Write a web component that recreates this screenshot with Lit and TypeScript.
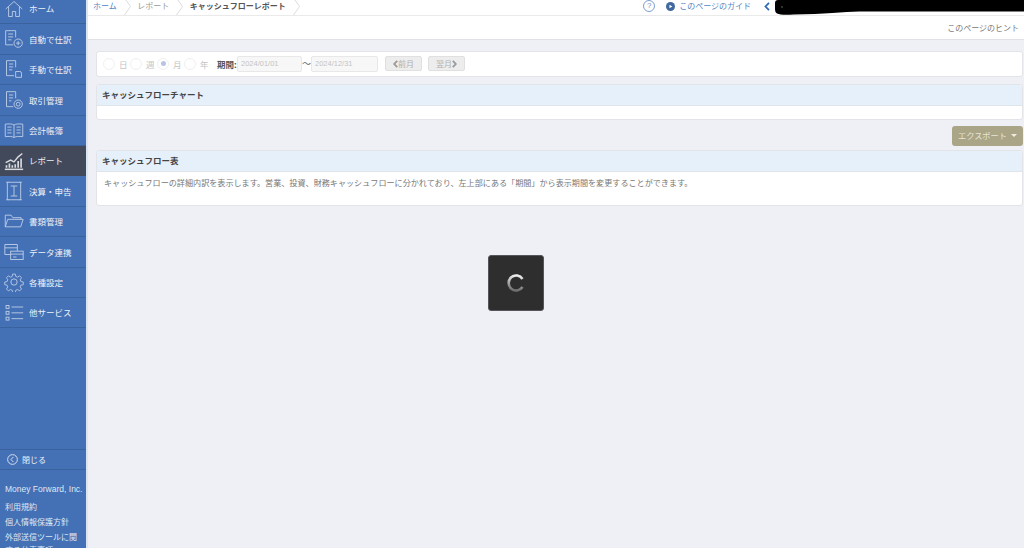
import { LitElement, html, css, svg } from "lit";
import { customElement } from "lit/decorators.js";

const ICONS: Record<string, unknown> = {
  home: svg`<path d="M2 12 12 3l10 9M5.500 9.500V21H10v-6h4v6h4.500V9.500"/>`,
  auto: svg`<path d="M14 10V2H2v17h9"/><path d="M5 6h6M5 9.500h6M5 13h4"/><circle cx="17" cy="17" r="5"/><path d="M17 14.500v5M14.500 17h5"/>`,
  manual: svg`<path d="M14 10V2H3v18h9"/><path d="M6 6h5M6 9.500h5M6 13h4"/><path d="M14 15h5a2 2 0 0 1 2 2v5h-7z"/>`,
  deal: svg`<path d="M14 10V2H3v18h8"/><path d="M6 6h5M6 9.500h5M6 13h3"/><circle cx="17" cy="17" r="5"/><circle cx="17" cy="17" r="2.300"/>`,
  book: svg`<path d="M12 6C10 4.500 6 4.500 1.500 5v15c4.500-.5 8.500-.5 10.500 1 2-1.500 6-1.500 10.500-1V5C18 4.500 14 4.500 12 6zM12 6v15"/><path d="M4 8.500h5M4 12h5M4 15.500h5M15 8.500h5M15 12h5M15 15.500h5"/>`,
  report: svg`<path d="M1 22h22" stroke-width="1.800"/><path d="M2 14l6-3 4 2 5-6 5-4" stroke-width="1.700"/><path d="M3 20v-3M6.500 20v-5M10 20v-3M13.500 20v-4M17 20v-8M20.500 20v-11" stroke-width="2"/>`,
  settle: svg`<rect x="4" y="1.500" width="16" height="21" rx="1"/><path d="M8 6h8M12 6v12M8 18h8"/><path d="M2.500 1.500h3M2.500 22.500h3M18.500 1.500h3M18.500 22.500h3"/>`,
  folder: svg`<path d="M1.500 19V5h7l2 3h10v2"/><path d="M1.500 19l3-9h18.500l-3 9z"/>`,
  data: svg`<path d="M16 11V3H1v12h7"/><path d="M1 7h15"/><rect x="8" y="11" width="15" height="10"/><path d="M8 14.500h15M11 18h4"/>`,
  gear: svg`<circle cx="12" cy="12" r="3.800"/><path d="M10.300 2h3.400l.6 3 2.200.9 2.600-1.700 2.400 2.400-1.700 2.600.9 2.200 3 .6v3.400l-3 .6-.9 2.200 1.700 2.600-2.400 2.400-2.600-1.700-2.200.9-.6 3h-3.400l-.6-3-2.200-.9-2.600 1.700-2.400-2.400 1.700-2.600-.9-2.200-3-.6v-3.400l3-.6.9-2.200-1.700-2.600 2.400-2.400 2.600 1.700 2.200-.9z" transform="translate(.6 .6) scale(.95)"/>`,
  other: svg`<rect x="2.500" y="3" width="3.500" height="3.500"/><rect x="2.500" y="10" width="3.500" height="3.500"/><rect x="2.500" y="17" width="3.500" height="3.500"/><path d="M9 4.800h14M9 11.800h14M9 18.800h14"/>`,
};

const NAV = [
  ["home", "ホーム"],
  ["auto", "自動で仕訳"],
  ["manual", "手動で仕訳"],
  ["deal", "取引管理"],
  ["book", "会計帳簿"],
  ["report", "レポート"],
  ["settle", "決算・申告"],
  ["folder", "書類管理"],
  ["data", "データ連携"],
  ["gear", "各種設定"],
  ["other", "他サービス"],
];

@customElement("app-root")
export class AppRoot extends LitElement {
  static styles = css`
    :host {
      display: block;
      width: 1024px;
      height: 548px;
      overflow: hidden;
      position: relative;
      font-family: "Noto Sans CJK JP", "Liberation Sans", sans-serif;
      font-size: 8px;
      color: #555;
      background: #eff0f5;
    }
    .shell { display: flex; height: 548px; }
    .side {
      width: 86px;
      flex: none;
      background: #4470b5;
      color: #eef2f9;
      display: flex;
      flex-direction: column;
      overflow: hidden;
      justify-content: space-between;
    }
    .nav { margin-top: -6px; }
    .item {
      height: 30.400px;
      box-sizing: border-box;
      border-bottom: 1px solid #3a629f;
      display: flex;
      align-items: center;
      gap: 5px;
      padding-left: 4px;
      font-size: 8.500px;
      line-height: 1;
    }
    .item.active { background: #42495a; border-bottom-color: #42495a; }
    .item svg {
      width: 20px;
      height: 20px;
      flex: none;
      fill: none;
      stroke: #bccde7;
      stroke-width: 1.100;
    }
    .item.active svg { stroke: #d8dade; }
    .foot { height: 99px; flex: none; overflow: hidden; }
    .close {
      height: 21px;
      box-sizing: border-box;
      border-top: 1px solid #3a629f;
      border-bottom: 1px solid #3a629f;
      display: flex;
      align-items: center;
      gap: 4px;
      padding-left: 7px;
      font-size: 8px;
    }
    .close svg { width: 11px; height: 11px; fill: none; stroke: #e0e8f3; stroke-width: 1; }
    .links { padding: 12px 0 0 5px; font-size: 8px; line-height: 15px; color: #dfe7f3; }
    .links .co { font-family: "Liberation Sans", sans-serif; font-size: 8.500px; margin-bottom: 2px; }
    .links .wrap { line-height: 13px; margin-top: 1px; white-space: nowrap; }
    .gutter { width: 2px; background: #dbe6f5; flex: none; }
    .main { flex: 1; min-width: 0; display: flex; flex-direction: column; }
    .top {
      height: 16px;
      box-sizing: border-box;
      background: #fff;
      border-bottom: 1px solid #eaeaea;
      display: flex;
      align-items: center;
      padding: 0 0 3px 5px;
      font-size: 8px;
      line-height: 10px;
    }
    .crumb { display: flex; align-items: center; color: #9a9a9a; }
    .crumb.link { color: #4f86c6; }
    .crumb.now { color: #555; font-weight: 700; }
    .crumb svg { width: 7px; height: 17px; margin: 0 6.500px 0 7px; fill: none; stroke: #dcdcdc; stroke-width: 1; }
    .guide { margin-left: auto; display: flex; align-items: center; color: #4f86c6; }
    .guide .q {
      width: 10px; height: 10px; border: 1px solid #7d9fd0; border-radius: 50%;
      display: grid; place-items: center; font-size: 8px; color: #6f93c9; margin-right: 11px;
      font-family: "Liberation Sans", sans-serif;
    }
    .guide .play { width: 9px; height: 9px; margin-right: 4px; }
    .guide .back { width: 6px; height: 9px; margin-left: 13px; fill: none; stroke: #2f6cb8; stroke-width: 1.800; }
    .guide .spacer { width: 254px; }
    .hint {
      height: 24px;
      box-sizing: border-box;
      background: #fff;
      border-bottom: 1px solid #e2e2e6;
      display: flex;
      align-items: center;
      justify-content: flex-end;
      padding-right: 5px;
      font-size: 8px;
      color: #777;
    }
    .content { padding: 11px 1px 0 8px; display: flex; flex-direction: column; }
    .card {
      background: #fff;
      border: 1px solid #e3e4e8;
      border-radius: 3px;
      box-sizing: border-box;
    }
    .filter {
      height: 26px;
      display: flex;
      align-items: center;
      padding: 0 0 1px 6px;
      margin-bottom: 7px;
    }
    .radio { display: flex; align-items: center; color: #c4c4c4; font-size: 8.500px; margin-right: 2px; width: 25px; }
    .radio i {
      width: 10px; height: 10px; border: 1px solid #f0f0f0; border-radius: 50%;
      display: grid; place-items: center; margin-right: 4px; flex: none;
    }
    .radio i.on::after { content: ""; width: 5px; height: 5px; border-radius: 50%; background: #b9c3e6; }
    .label { font-weight: 700; color: #555; font-size: 8.500px; margin-left: 6px; width: 20px; white-space: nowrap; }
    .input {
      width: 65px; height: 16px; box-sizing: border-box; border: 1px solid #e8e8e8; border-radius: 2px;
      background: #f7f7f7; color: #c4c4c4; font-family: "Liberation Sans", sans-serif; font-size: 7.500px;
      display: flex; align-items: center; padding-left: 3px;
    }
    .input.wide { width: 67px; }
    .tilde { width: 9px; text-align: center; color: #666; font-size: 9px; }
    .btn {
      height: 15px; box-sizing: border-box; background: #ededed; border: 1px solid #e0e0e0; border-radius: 2px;
      color: #b0b0b0; display: flex; align-items: center; justify-content: center; width: 37px; font-size: 8px;
    }
    .btn.first { margin-left: 7px; margin-right: 6px; }
    .btn svg { width: 5px; height: 8px; fill: none; stroke: #999; stroke-width: 1.800; }
    .head {
      height: 21px; box-sizing: border-box; background: #e6f0fb; border-bottom: 1px solid #dfe3ea;
      display: flex; align-items: center; padding: 0 0 3px 5px; font-weight: 700; font-size: 8.500px; color: #444;
      border-radius: 3px 3px 0 0;
    }
    .body-a { height: 13px; }
    .body-b { height: 33px; padding: 6px 7px; box-sizing: border-box; font-size: 8.100px; line-height: 10px; color: #777; white-space: nowrap; }
    .actions { display: flex; justify-content: flex-end; margin: 6px 0 4px; }
    .export {
      width: 71px; height: 20px; box-sizing: border-box; padding-bottom: 2px; background: #a9a586; border-radius: 3px; color: #e6e4d5;
      display: flex; align-items: center; justify-content: center; gap: 4px; font-size: 8.200px;
    }
    .export i { width: 0; height: 0; border: 3px solid transparent; border-top-color: #f0eee2; border-bottom: 0; }
    .redact { position: absolute; left: 774px; top: 0; width: 250px; height: 16px; }
    .loader {
      position: absolute; left: 488px; top: 255px; width: 56px; height: 56px;
      background: #2e2e2e; border: 1px solid #55555a; border-radius: 3px; box-sizing: border-box;
      display: grid; place-items: center;
    }
    .loader svg { width: 20px; height: 20px; fill: none; stroke-width: 2.600; }
  `;

  render() {
    return html`
      <div class="shell">
        <aside class="side">
          <div class="nav">
            ${NAV.map(
              ([k, t]) => html`<div class="item ${k === "report" ? "active" : ""}">
                <svg viewBox="0 0 24 24">${ICONS[k]}</svg><span>${t}</span>
              </div>`
            )}
          </div>
          <div class="foot">
            <div class="close">
              <svg viewBox="0 0 12 12"><circle cx="6" cy="6" r="5.300"/><path d="M7 3.200 4.300 6 7 8.800"/></svg>
              <span>閉じる</span>
            </div>
            <div class="links">
              <div class="co">Money Forward, Inc.</div>
              <div>利用規約</div>
              <div>個人情報保護方針</div>
              <div class="wrap">外部送信ツールに関<br />する公表事項</div>
            </div>
          </div>
        </aside>
        <div class="gutter"></div>
        <main class="main">
          <div class="top">
            <span class="crumb link">ホーム<svg viewBox="0 0 7 17"><path d="M.5 0l6 8.500-6 8.500"/></svg></span>
            <span class="crumb">レポート<svg viewBox="0 0 7 17"><path d="M.5 0l6 8.500-6 8.500"/></svg></span>
            <span class="crumb now">キャッシュフローレポート<svg viewBox="0 0 7 17"><path d="M.5 0l6 8.500-6 8.500"/></svg></span>
            <div class="guide">
              <span class="q">?</span>
              <svg class="play" viewBox="0 0 10 10"><circle cx="5" cy="5" r="5" fill="#41699f"/><path d="M3.800 3v4L7 5z" fill="#fff"/></svg>
              <span>このページのガイド</span>
              <svg class="back" viewBox="0 0 6 9"><path d="M5 .8 1.500 4.500 5 8.200"/></svg>
              <span class="spacer"></span>
            </div>
          </div>
          <div class="hint">このページのヒント</div>
          <div class="content">
            <div class="card filter">
              <span class="radio"><i></i>日</span>
              <span class="radio"><i></i>週</span>
              <span class="radio"><i class="on"></i>月</span>
              <span class="radio"><i></i>年</span>
              <span class="label">期間:</span>
              <span class="input">2024/01/01</span>
              <span class="tilde">〜</span>
              <span class="input wide">2024/12/31</span>
              <span class="btn first"><svg viewBox="0 0 5 8"><path d="M4.200 .8 1.200 4l3 3.200"/></svg>前月</span>
              <span class="btn">翌月<svg viewBox="0 0 5 8"><path d="M.8 .8 3.800 4l-3 3.200"/></svg></span>
            </div>
            <section class="card">
              <div class="head">キャッシュフローチャート</div>
              <div class="body-a"></div>
            </section>
            <div class="actions"><span class="export">エクスポート<i></i></span></div>
            <section class="card">
              <div class="head">キャッシュフロー表</div>
              <div class="body-b">キャッシュフローの詳細内訳を表示します。営業、投資、財務キャッシュフローに分かれており、左上部にある「期間」から表示期間を変更することができます。</div>
            </section>
          </div>
        </main>
      </div>
      <svg class="redact" viewBox="0 0 250 16" preserveAspectRatio="none">
        <path d="M1 3C1 1 2 0 4 0H250V11.500H85C70 12 50 14 20 14.500C12 15 6 15 3 13.500C1 12.500 1 10 1 8Z" fill="#000" />
        <circle cx="8" cy="7" r=".7" fill="#888" />
      </svg>
      <div class="loader">
        <svg viewBox="0 0 20 20">
          <defs>
            <linearGradient id="sp" x1="0.800" y1="0" x2="0.700" y2="1">
              <stop offset="0" stop-color="#f0f0f0" />
              <stop offset="0.550" stop-color="#a8a8a8" />
              <stop offset="1" stop-color="#707070" />
            </linearGradient>
          </defs>
          <path d="M16.500 6A7.500 7.500 0 1 0 16.500 14" stroke="url(#sp)" />
        </svg>
      </div>
    `;
  }
}
